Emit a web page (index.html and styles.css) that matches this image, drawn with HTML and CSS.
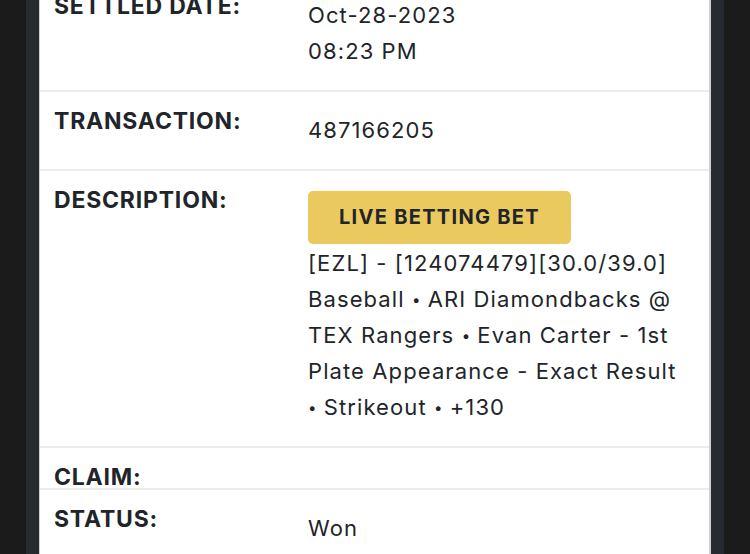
FILE: index.html
```html
<!DOCTYPE html>
<html lang="en">
<head>
<meta charset="utf-8">
<title>Bet details</title>
<link rel="stylesheet" href="styles.css">
</head>
<body>
<div class="frame">
  <div class="panel">
    <div class="row">
      <div class="label">Settled date:</div>
      <div class="value">Oct-28-2023<br>08:23 PM</div>
    </div>
    <div class="row">
      <div class="label">Transaction:</div>
      <div class="value">487166205</div>
    </div>
    <div class="row">
      <div class="label">Description:</div>
      <div class="value">
        <span class="badge">Live Betting Bet</span>
        <div class="desc">[EZL] - [124074479][30.0/39.0] Baseball <span class="dot">•</span> ARI Diamondbacks @ TEX Rangers <span class="dot">•</span> Evan Carter - 1st Plate Appearance - Exact Result <span class="dot">•</span> Strikeout <span class="dot">•</span> +130</div>
      </div>
    </div>
    <div class="row row--empty">
      <div class="label">Claim:</div>
      <div class="value"></div>
    </div>
    <div class="row">
      <div class="label">Status:</div>
      <div class="value">Won</div>
    </div>
  </div>
</div>
</body>
</html>
```

FILE: styles.css
```css
html, body {
  margin: 0;
  padding: 0;
  height: 554px;
  overflow: hidden;
  background: #1b1b1b;
}
.frame {
  margin: 0 26px;
  padding: 0 13px;
  background: #272b2f;
  min-height: 554px;
}
.panel {
  margin-top: -23px;
  background: #fff;
  border-left: 1px solid #cfcfcf;
  border-right: 2px solid #cfcfcf;
  font-family: Inter, "Noto Sans", sans-serif;
  color: #212529;
}
.row {
  display: grid;
  grid-template-columns: 254px 1fr;
  align-items: start;
  padding: 20px 28px 21px 14px;
  border-bottom: 2px solid #ececec;
}
.row--empty {
  padding-bottom: 1px;
}
.label {
  font-size: 23px;
  font-weight: 700;
  line-height: 19px;
  letter-spacing: 0.8px;
  text-transform: uppercase;
  white-space: nowrap;
}
.value {
  font-size: 22px;
  line-height: 36px;
  letter-spacing: 1.1px;
}
.dot {
  font-size: 15px;
  line-height: 0;
  letter-spacing: 0;
  vertical-align: 2px;
}
.badge {
  display: inline-block;
  background: #eac95f;
  border-radius: 5px;
  padding: 12px 31px;
  font-size: 20px;
  font-weight: 700;
  line-height: 29px;
  letter-spacing: 1.3px;
  text-transform: uppercase;
  vertical-align: top;
}
.desc {
  margin-top: 1px;
}
```
